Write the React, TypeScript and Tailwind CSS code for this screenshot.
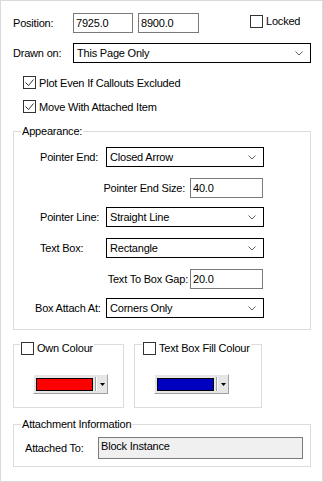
import React from 'react';

function Check({ checked }: { checked?: boolean }) {
  return (
    <span className="w-[13px] h-[13px] border border-[#333333] bg-white flex-none flex items-center justify-center">
      {checked && (
        <svg width="11" height="11" viewBox="0 0 11 11">
          <path d="M1.5 5.5 L4.5 8.5 L9.5 2.5" fill="none" stroke="#333333" strokeWidth="1" />
        </svg>
      )}
    </span>
  );
}

function Chevron() {
  return (
    <svg width="8" height="5" viewBox="0 0 8 5" className="flex-none">
      <polyline points="0.5,0.5 4,4 7.5,0.5" fill="none" stroke="#606060" strokeWidth="1" />
    </svg>
  );
}

function Select({ value, className }: { value: string; className: string }) {
  return (
    <div className={`h-[20px] border border-black bg-white flex items-center justify-between pl-[3px] pr-[7px] ${className}`}>
      <span>{value}</span>
      <Chevron />
    </div>
  );
}

function TextInput({ value, className }: { value: string; className: string }) {
  return (
    <div className={`h-[20px] border border-[#7a7a7a] bg-white flex items-center px-[2px] ${className}`}>
      {value}
    </div>
  );
}

function ColourButton({ colour }: { colour: string }) {
  return (
    <div className="w-[75px] h-[20px] flex items-center bg-[#e6e6e6] border-t border-l border-t-white border-l-white border-b border-r border-b-[#a0a0a0] border-r-[#a0a0a0]">
      <div className={`ml-[2px] w-[57px] h-[13px] border border-black ${colour}`} />
      <div className="ml-[2px] w-[1px] h-[14px] bg-[#a0a0a0] border-r border-white box-content" />
      <svg width="5" height="3" viewBox="0 0 5 3" className="ml-[3px]">
        <polygon points="0,0 5,0 2.5,3" fill="#000" />
      </svg>
    </div>
  );
}

export default function App() {
  return (
    <div className="w-[323px] h-[482px] border border-[#dadada] bg-white text-black text-[11px] leading-[14px] tracking-[-0.2px] font-['Liberation_Sans',Arial,sans-serif] pt-[12px] pl-[12px] pr-[11px]">
      {/* position row */}
      <div className="flex items-start">
        <span className="w-[60px] leading-[20px]">Position:</span>
        <TextInput value="7925.0" className="w-[60px]" />
        <TextInput value="8900.0" className="ml-[5px] w-[61px]" />
        <label className="ml-[51px] mt-[1px] flex items-center gap-[3px]">
          <Check />
          <span>Locked</span>
        </label>
      </div>

      <div className="mt-[10px] flex items-center">
        <span className="w-[60px]">Drawn on:</span>
        <Select value="This Page Only" className="w-[238px]" />
      </div>

      <label className="mt-[13px] ml-[10px] flex items-center gap-[3px] h-[13px]">
        <Check checked />
        <span>Plot Even If Callouts Excluded</span>
      </label>
      <label className="mt-[11px] ml-[10px] flex items-center gap-[3px] h-[13px]">
        <Check checked />
        <span>Move With Attached Item</span>
      </label>

      {/* appearance */}
      <fieldset className="mt-[11px] w-[298px] border border-[#dcdcdc] pb-[11px]">
        <legend className="ml-[7px] px-[1px] leading-[14px]">Appearance:</legend>
        <div className="mt-[9px] flex items-center">
          <span className="w-[92px] pl-[26px]">Pointer End:</span>
          <Select value="Closed Arrow" className="w-[158px]" />
        </div>
        <div className="mt-[11px] flex items-center">
          <span className="w-[176px] pr-[5px] text-right">Pointer End Size:</span>
          <TextInput value="40.0" className="w-[73px]" />
        </div>
        <div className="mt-[9px] flex items-center">
          <span className="w-[92px] pl-[26px]">Pointer Line:</span>
          <Select value="Straight Line" className="w-[158px]" />
        </div>
        <div className="mt-[11px] flex items-center">
          <span className="w-[92px] pl-[26px]">Text Box:</span>
          <Select value="Rectangle" className="w-[158px]" />
        </div>
        <div className="mt-[11px] flex items-center">
          <span className="w-[176px] pr-[2px] text-right">Text To Box Gap:</span>
          <TextInput value="20.0" className="w-[73px]" />
        </div>
        <div className="mt-[9px] flex items-center">
          <span className="w-[92px] pl-[21px] whitespace-nowrap">Box Attach At:</span>
          <Select value="Corners Only" className="w-[158px]" />
        </div>
      </fieldset>

      {/* colours */}
      <div className="mt-[7px] flex gap-[10px]">
        <fieldset className="w-[111px] border border-[#dcdcdc] pb-[13px]">
          <legend className="ml-[6px] px-[1px] h-[14px]">
            <span className="mt-[4px] flex items-center gap-[3px]">
              <Check />
              <span>Own Colour</span>
            </span>
          </legend>
          <div className="mt-[23px] pl-[19px]">
            <ColourButton colour="bg-[#ff0000]" />
          </div>
        </fieldset>
        <fieldset className="w-[128px] border border-[#dcdcdc] pb-[13px]">
          <legend className="ml-[7px] px-[1px] h-[14px]">
            <span className="mt-[4px] flex items-center gap-[3px]">
              <Check />
              <span>Text Box Fill Colour</span>
            </span>
          </legend>
          <div className="mt-[23px] pl-[19px]">
            <ColourButton colour="bg-[#0000c0]" />
          </div>
        </fieldset>
      </div>

      {/* attachment */}
      <fieldset className="mt-[9px] w-[298px] border border-[#dcdcdc] pb-[7px]">
        <legend className="ml-[7px] px-[1px] leading-[14px]">Attachment Information</legend>
        <div className="mt-[6px] flex items-center">
          <span className="w-[84px] pl-[11px]">Attached To:</span>
          <div className="w-[205px] h-[22px] border border-[#7a7a7a] bg-[#f0f0f0] px-[2px] pt-[1px]">Block Instance</div>
        </div>
      </fieldset>
    </div>
  );
}
